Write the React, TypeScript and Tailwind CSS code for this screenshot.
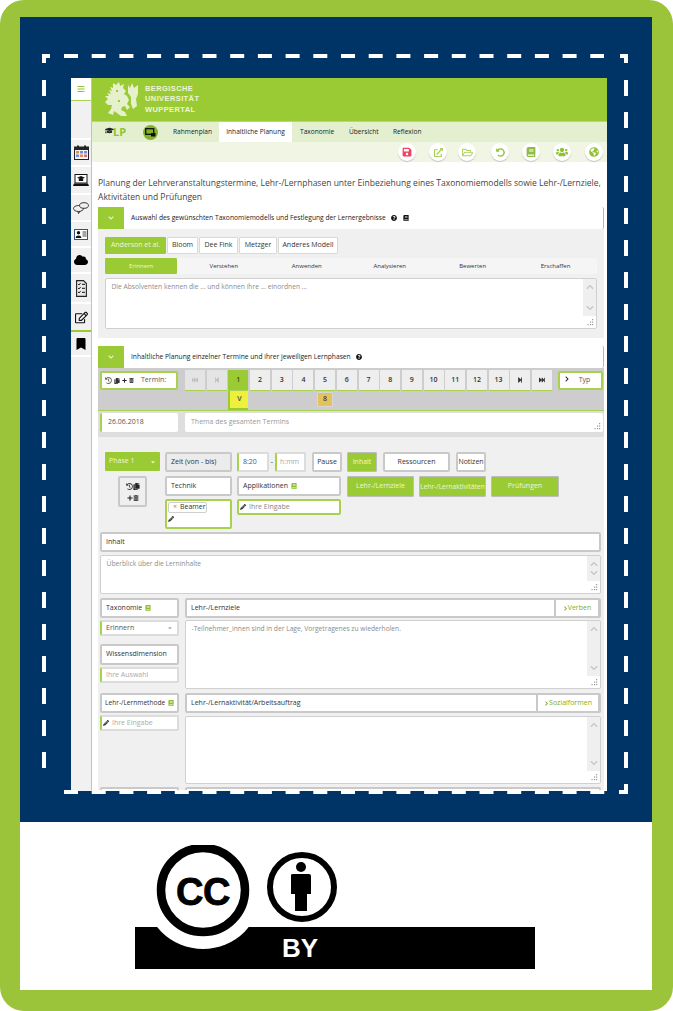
import React from 'react'
import {
  FaBars,
  FaBook,
  FaBookmark,
  FaCaretDown,
  FaChevronDown,
  FaChevronRight,
  FaChevronUp,
  FaCloud,
  FaCopy,
  FaExternalLinkAlt,
  FaGlobeAmericas,
  FaGraduationCap,
  FaPencilAlt,
  FaPlus,
  FaQuestionCircle,
  FaRegEdit,
  FaRegFolderOpen,
  FaSave,
  FaStepBackward,
  FaStepForward,
  FaFastBackward,
  FaFastForward,
  FaTrashAlt,
  FaUndoAlt,
  FaUsers,
  FaHistory,
} from 'react-icons/fa'

const boxGray = 'border-2 border-[#c9c9c9] rounded-[2px] bg-white flex items-center text-[7px] font-medium text-[#333]'
const boxGreen = 'border-2 border-[#a8d24e] rounded-[2px] bg-white flex items-center text-[7px] text-[#555]'
const greenBtn = 'bg-[#9bcb34] border border-[#bdbdbd] rounded-[1px] flex items-center justify-center text-[7px] font-medium text-[#eef6dc]'

function CalendarIcon() {
  return (
    <svg width="15" height="15" viewBox="0 0 15 15">
      <rect x="0.5" y="2" width="14" height="12.5" fill="#f3f3f3" stroke="#222" />
      <rect x="0.5" y="2" width="14" height="3" fill="#222" />
      <rect x="3" y="0.5" width="2" height="3" fill="#222" />
      <rect x="10" y="0.5" width="2" height="3" fill="#222" />
      <rect x="2" y="6" width="3" height="2.5" fill="#e0904a" />
      <rect x="6" y="6" width="3" height="2.5" fill="#6f8fd0" />
      <rect x="10" y="6" width="3" height="2.5" fill="#6f8fd0" />
      <rect x="2" y="9.5" width="3" height="2.5" fill="#6f8fd0" />
      <rect x="6" y="9.5" width="3" height="2.5" fill="#e0904a" />
      <rect x="10" y="9.5" width="3" height="2.5" fill="#d66a8a" />
    </svg>
  )
}

function LaptopIcon() {
  return (
    <svg width="16" height="12" viewBox="0 0 16 12">
      <rect x="2" y="0.5" width="12" height="8.5" fill="#fff" stroke="#111" />
      <path d="M8 2 L12 3.8 L8 5.6 L4 3.8 Z M5.8 5 H10.2 V7 H5.8 Z" fill="#111" />
      <path d="M1 9.5 H15 L16 12 H0 Z" fill="#111" />
    </svg>
  )
}

function BubblesIcon() {
  return (
    <svg width="16" height="12" viewBox="0 0 16 12" fill="none" stroke="#222" strokeWidth="0.9">
      <ellipse cx="5.5" cy="6.5" rx="5" ry="3" />
      <ellipse cx="11" cy="3.5" rx="4.4" ry="2.8" fill="#f1f1f1" />
      <path d="M5 9.5 L5.5 11.5 L7 9.3" />
    </svg>
  )
}

function CardIcon() {
  return (
    <svg width="14" height="11" viewBox="0 0 14 11">
      <rect x="0.5" y="0.5" width="13" height="10" fill="#fff" stroke="#33527c" />
      <circle cx="4.5" cy="3.7" r="1.7" fill="#111" />
      <path d="M1.7 9 C1.7 5.8 7.3 5.8 7.3 9 Z" fill="#111" />
      <path d="M8.5 3 H12.5 M8.5 5 H12.5 M8.5 7 H12.5" stroke="#333" strokeWidth="0.9" />
    </svg>
  )
}

function ChecklistIcon() {
  return (
    <svg width="11" height="17" viewBox="0 0 11 17" fill="none">
      <path d="M0.6 0.6 H7.5 L10.4 3.5 V16.4 H0.6 Z" fill="#e8e8e8" stroke="#222" strokeWidth="1.1" />
      <path d="M2 4 L3 5 L4.6 3 M2 8 L3 9 L4.6 7 M2 12 L3 13 L4.6 11" stroke="#111" strokeWidth="0.9" />
      <path d="M6 4.3 H9 M6 8.3 H9 M6 12.3 H9" stroke="#111" strokeWidth="1" />
    </svg>
  )
}

function LionLogo() {
  return (
    <svg width="33" height="35" viewBox="0 0 33 35" fill="#e6f1cc">
      <path d="M8 1 L11 3 L14 0 L15 4 L19 2 L18 6 L21 9 L19 12 L22 14 L24 18 L22 22 L25 25 L22 28 L20 24 L17 25 L16 28 L20 30 L22 34 L16 34 L12 31 L9 29 L8 33 L3 31 L6 27 L7 23 L3 23 L0 20 L3 17 L0 14 L4 14 L2 11 L6 12 L4 8 L7 9 L5 5 L8 6 Z" />
      <path d="M23 3 L25 6 L27 1 L29 6 L33 3 L33 12 L31 17 L32 24 L28 27 L26 22 L26 15 L23 11 Z" />
      <path d="M11 8 h2 v2 h-2 Z M13 18 h2 v2 h-2 Z" fill="#9bcb34" />
    </svg>
  )
}

function ScreenIcon() {
  return (
    <span className="w-[15px] h-[15px] rounded-full bg-[#84b32a] flex items-center justify-center">
      <svg width="11" height="9" viewBox="0 0 11 9">
        <rect x="0.7" y="0.7" width="8" height="5.6" fill="none" stroke="#111" strokeWidth="1.3" />
        <path d="M6 5 L10.5 5 L10.5 8.5 L6 8.5 Z" fill="#111" />
      </svg>
    </span>
  )
}

function Grip() {
  return (
    <svg className="absolute right-[2px] bottom-[2px]" width="7" height="7" viewBox="0 0 7 7" fill="#9a9a9a">
      <rect x="5" y="0" width="1.2" height="1.2" />
      <rect x="3" y="2.5" width="1.2" height="1.2" />
      <rect x="5" y="2.5" width="1.2" height="1.2" />
      <rect x="0.5" y="5" width="1.2" height="1.2" />
      <rect x="3" y="5" width="1.2" height="1.2" />
      <rect x="5" y="5" width="1.2" height="1.2" />
    </svg>
  )
}

interface AreaProps {
  text?: string
  className: string
  scroll?: boolean
}

function Area({ text, className, scroll = true }: AreaProps) {
  return (
    <div className={`relative border-[1.5px] border-[#d0d0d0] rounded-[2px] bg-white flex ${className}`}>
      <div className="flex-1 pl-[5.5px] pt-[3px] text-[6.7px] leading-[9px] text-[#8c8c8c]">{text}</div>
      {scroll && (
        <div className="w-[13px] mb-[12px] bg-[#efefef] flex flex-col items-center justify-between py-[4px] text-[#c4c4c4]">
          <FaChevronUp size={8} />
          <FaChevronDown size={8} />
        </div>
      )}
      <Grip />
    </div>
  )
}

function Book() {
  return <FaBook size={6} className="text-[#8fbf35] ml-[3px] shrink-0" />
}

const subTabs = ['Verstehen', 'Anwenden', 'Analysieren', 'Bewerten', 'Erschaffen']
const modelTabs = [
  { label: 'Bloom', w: 'w-[31px]' },
  { label: 'Dee Fink', w: 'w-[39px]' },
  { label: 'Metzger', w: 'w-[38px]' },
  { label: 'Anderes Modell', w: 'w-[60px]' },
]
const navTabs = [
  { label: 'Rahmenplan', cls: 'ml-[15px] w-[46px]' },
  { label: 'Inhaltliche Planung', cls: 'w-[73px] bg-white h-full justify-center' },
  { label: 'Taxonomie', cls: 'ml-[8px] w-[41px]' },
  { label: 'Übersicht', cls: 'ml-[8px] w-[36px]' },
  { label: 'Reflexion', cls: 'ml-[8px] w-[36px]' },
]
const sideItems = [
  { icon: <CalendarIcon />, h: 'h-[27px]' },
  { icon: <LaptopIcon />, h: 'h-[28px]' },
  { icon: <BubblesIcon />, h: 'h-[27px]' },
  { icon: <CardIcon />, h: 'h-[26px]' },
  { icon: <FaCloud size={14} className="text-black" />, h: 'h-[26px]' },
  { icon: <ChecklistIcon />, h: 'h-[30px]' },
  { icon: <FaRegEdit size={13} className="text-[#111]" />, h: 'h-[28px]' },
]
const tools = [
  { icon: <FaSave size={10} className="text-[#f2415f]" />, ml: 'ml-[306px]' },
  { icon: <FaExternalLinkAlt size={9} className="text-[#a9d257]" />, ml: 'ml-[13px]' },
  { icon: <FaRegFolderOpen size={11} className="text-[#a9d257]" />, ml: 'ml-[11px]' },
  { icon: <FaUndoAlt size={9} className="text-[#8fc332]" />, ml: 'ml-[15px]' },
  { icon: <FaBook size={10} className="text-[#8fbb46]" />, ml: 'ml-[13px]' },
  { icon: <FaUsers size={12} className="text-[#8fc332]" />, ml: 'ml-[13px]' },
  { icon: <FaGlobeAmericas size={10} className="text-[#8fc332]" />, ml: 'ml-[14px]' },
]
const pages: React.ReactNode[] = [
  <FaFastBackward size={6} />,
  <FaStepBackward size={6} />,
  '1', '2', '3', '4', '5', '6', '7', '8', '9', '10', '11', '12', '13',
  <FaStepForward size={6} />,
  <FaFastForward size={6} />,
]

function Pager() {
  return (
    <div className="bg-[#cdcdcd] border-b border-[#a8d24e] h-[43px] flex flex-col">
      <div className="h-[23px] flex pt-[2px]">
        <div className={`${boxGreen} ml-[2px] mt-[1px] w-[78px] h-[19px] pl-[3px]`}>
          <FaHistory size={7} className="text-[#666] shrink-0" />
          <FaCopy size={6} className="text-[#333] ml-[2px] shrink-0" />
          <FaPlus size={5} className="text-[#222] ml-[2px] shrink-0" />
          <FaTrashAlt size={5} className="text-[#333] ml-[2px] shrink-0" />
          <span className="ml-[7px] font-medium">Termin:</span>
        </div>
        <div className="ml-[7px] flex h-[21px]">
          {pages.map((page, i) => (
            <div
              key={i}
              className={`w-[20px] mr-[1.7px] flex items-center justify-center text-[7px] font-semibold border-b border-[#a8d24e] ${
                i === 2 ? 'bg-[#9bcb34] text-[#3a5208]' : i < 2 ? 'bg-[#e4e4e4] text-[#c0c0c0]' : 'bg-[#eeeeee] text-[#333]'
              }`}
            >
              {page}
            </div>
          ))}
        </div>
        <div className={`${boxGreen} ml-[4px] mt-[1px] w-[45px] h-[19px] font-medium`}>
          <FaChevronRight size={6} className="ml-[4px] mb-[3px] text-[#222]" />
          <span className="ml-[9px]">Typ</span>
        </div>
      </div>
      <div className="ml-[87px] flex flex-1">
        {pages.map((_, i) => (
          <div key={i} className={`w-[20px] mr-[1.7px] ${i === 2 ? 'bg-[#9bcb34] pl-[2px] pb-[2px]' : ''}`}>
            {i === 2 && (
              <div className="h-full bg-[#eef03c] flex items-center justify-center text-[7px] font-semibold text-[#444]">V</div>
            )}
            {i === 6 && (
              <div className="mx-[2px] mt-[1px] h-[15px] bg-[#e3c35e] border border-[#d8d8d8] rounded-[1px] flex items-center justify-center text-[7px] font-semibold text-[#444]">
                8
              </div>
            )}
          </div>
        ))}
      </div>
    </div>
  )
}

function AccordionHead({ title, book }: { title: string; book?: boolean }) {
  return (
    <div className="h-[22px] flex items-center bg-white border-r border-[#a8d24e] rounded-r-[2px]">
      <div className="w-[26px] h-full bg-[#9bcb34] flex items-center justify-center">
        <FaChevronDown size={6} className="text-[#f3f8e4]" />
      </div>
      <span className="ml-[7px] text-[6.7px] font-medium text-[#222]">{title}</span>
      <FaQuestionCircle size={6} className="ml-[5px] text-[#111]" />
      {book && <FaBook size={6} className="ml-[6px] text-[#111]" />}
    </div>
  )
}

function PhaseBlock() {
  return (
    <div className="flex gap-[5px] ml-[7px]">
      <div className="w-[55px]">
        <div className="h-[19px] bg-[#9bcb34] rounded-[1px] flex items-center justify-between px-[4px] text-[7px] font-medium text-[#eef6dc]">
          Phase 1
          <FaCaretDown size={6} />
        </div>
        <div className="mt-[5px] ml-[13px] w-[29px] h-[31px] border-2 border-[#c9c9c9] rounded-[2px] bg-[#efefef] flex flex-wrap items-center justify-center px-[3px] py-[2px] text-[#444]">
          <FaHistory size={7} />
          <FaCopy size={7} className="text-[#222]" />
          <FaPlus size={6} className="text-[#222]" />
          <FaTrashAlt size={6} />
        </div>
      </div>
      <div className="w-[67px]">
        <div className="h-[20px] border-2 border-[#c9c9c9] rounded-[2px] bg-[#ececec] flex items-center pl-[4px] text-[7px] font-medium text-[#333]">
          Zeit (von - bis)
        </div>
        <div className={`${boxGray} mt-[4px] h-[20px] pl-[4px]`}>Technik</div>
        <div className={`${boxGreen} mt-[3px] h-[30px] flex-col !items-start pl-[1px] pt-[1px]`}>
          <div className="h-[11px] w-[39px] border border-[#cfcfcf] rounded-[2px] flex items-center pl-[4px] font-medium text-[#333]">
            <span className="text-[#888] mr-[3px]">×</span>Beamer
          </div>
          <FaPencilAlt size={6} className="mt-[3px] text-[#333]" />
        </div>
      </div>
      <div className="w-[105px]">
        <div className="h-[20px] flex items-center">
          <div className="w-[32px] h-[20px] border-2 border-[#dcdcdc] border-l-[#a8d24e] rounded-[2px] bg-white flex items-center pl-[4px] text-[7px] font-medium text-[#555]">
            8:20
          </div>
          <span className="w-[6px] text-center text-[7px] text-[#333]">-</span>
          <div className="w-[31px] h-[20px] border-2 border-[#dcdcdc] border-l-[#a8d24e] rounded-[2px] bg-white flex items-center pl-[3px] text-[7px] text-[#aaa]">
            h:mm
          </div>
          <div className={`${boxGray} ml-[6px] w-[30px] h-[20px] justify-center`}>Pause</div>
        </div>
        <div className={`${boxGray} mt-[4px] w-[104px] h-[20px] pl-[4px]`}>
          Applikationen
          <Book />
        </div>
        <div className={`${boxGreen} mt-[3px] w-[104px] h-[16px] pl-[1px] text-[#888]`}>
          <FaPencilAlt size={6} className="text-[#333] mr-[3px]" />
          Ihre Eingabe
        </div>
      </div>
      <div>
        <div className="flex gap-[6px]">
          <div className={`${greenBtn} w-[30px] h-[20px]`}>Inhalt</div>
          <div className={`${boxGray} w-[67px] h-[20px] justify-center`}>Ressourcen</div>
          <div className={`${boxGray} w-[30px] h-[20px] justify-center whitespace-nowrap`}>Notizen</div>
        </div>
        <div className="flex gap-[5px] mt-[4px]">
          <div className={`${greenBtn} w-[67px] h-[21px]`}>Lehr-/Lernziele</div>
          <div className={`${greenBtn} w-[67px] h-[21px] whitespace-nowrap !text-[6.6px]`}>Lehr-/Lernaktivitäten</div>
          <div className={`${greenBtn} w-[68px] h-[21px]`}>Prüfungen</div>
        </div>
      </div>
    </div>
  )
}

function LearningGoals() {
  return (
    <div className="ml-[2px] w-[501px]">
      <div className={`${boxGray} h-[20px] mt-[3px] pl-[4px]`}>Inhalt</div>
      <Area className="h-[39px] mt-[3px]" text="Überblick über die Lerninhalte" />
      <div className="flex gap-[6px] mt-[4px] h-[91px]">
        <div className="w-[79px]">
          <div className={`${boxGray} h-[20px] pl-[4px]`}>
            Taxonomie
            <Book />
          </div>
          <div className="mt-[2px] h-[16px] border-2 border-[#dcdcdc] border-l-[#a8d24e] rounded-[2px] bg-white flex items-center justify-between px-[4px] text-[7px] font-medium text-[#555]">
            Erinnern
            <FaCaretDown size={6} className="text-[#aaa]" />
          </div>
          <div className={`${boxGray} mt-[8px] h-[21px] pl-[4px]`}>Wissensdimension</div>
          <div className="mt-[2px] h-[16px] border-2 border-[#dcdcdc] border-l-[#a8d24e] rounded-[2px] bg-white flex items-center pl-[4px] text-[7px] text-[#aaa]">
            Ihre Auswahl
          </div>
        </div>
        <div className="w-[416px]">
          <div className={`${boxGray} h-[20px] pl-[4px] justify-between`}>
            Lehr-/Lernziele
            <div className="w-[46px] h-[20px] border-2 border-[#c9c9c9] rounded-[2px] -mr-[1px] flex items-center justify-center text-[#7fae25]">
              <FaChevronRight size={5} className="text-[#6f9c18]" />
              Verben
            </div>
          </div>
          <Area
            className="h-[69px] mt-[2px]"
            text="-Teilnehmer_innen sind in der Lage, Vorgetragenes zu wiederholen."
          />
        </div>
      </div>
      <div className="flex gap-[6px] mt-[4px] h-[91px]">
        <div className="w-[79px]">
          <div className={`${boxGray} h-[20px] pl-[3px] whitespace-nowrap !text-[6.6px]`}>
            Lehr-/Lernmethode
            <Book />
          </div>
          <div className="mt-[2px] h-[16px] border-2 border-[#dcdcdc] border-l-[#a8d24e] rounded-[2px] bg-white flex items-center pl-[1px] text-[7px] text-[#aaa]">
            <FaPencilAlt size={6} className="text-[#333] mr-[3px]" />
            Ihre Eingabe
          </div>
        </div>
        <div className="w-[416px]">
          <div className={`${boxGray} h-[20px] pl-[4px] justify-between`}>
            Lehr-/Lernaktivität/Arbeitsauftrag
            <div className="w-[64px] h-[20px] border-2 border-[#c9c9c9] rounded-[2px] -mr-[1px] flex items-center justify-center text-[#7fae25]">
              <FaChevronRight size={5} className="text-[#6f9c18]" />
              Sozialformen
            </div>
          </div>
          <Area className="h-[68px] mt-[3px]" />
        </div>
      </div>
      <div className="flex gap-[6px] mt-[3px]">
        <div className={`${boxGray} w-[79px] h-[20px]`} />
        <div className={`${boxGray} w-[416px] h-[20px]`} />
      </div>
    </div>
  )
}

function Screen() {
  return (
    <div className="w-[536px] h-[713px] flex overflow-hidden bg-white font-['Open_Sans',sans-serif]">
      <aside className="w-[21px] shrink-0 bg-[#f1f1f1] border-r border-[#b5d670] flex flex-col">
        <div className="h-[23px] bg-white border-b border-[#a8d24e] flex items-center justify-center">
          <FaBars size={8} className="text-[#8fc332]" />
        </div>
        <div className="h-[37px]" />
        {sideItems.map((item, i) => (
          <div key={i} className={`${item.h} border-t-2 border-white flex items-center justify-center`}>
            {item.icon}
          </div>
        ))}
        <div className="h-[27px] border-t-2 border-[#9bcb34] border-b-2 border-b-white flex items-center justify-center">
          <FaBookmark size={12} className="text-black" />
        </div>
      </aside>
      <main className="flex-1 min-w-0">
        <header className="h-[44px] bg-[#9bcb34] border-b border-[#b6da6c] flex items-center pl-[13px]">
          <LionLogo />
          <div className="ml-[7px] text-[7.5px] leading-[10.4px] font-bold tracking-[0.4px] text-[#edf5d8] font-['Liberation_Sans',sans-serif]">
            <div>BERGISCHE</div>
            <div>UNIVERSITÄT</div>
            <div>WUPPERTAL</div>
          </div>
        </header>
        <nav className="h-[20px] bg-[#e4efcf] flex items-center text-[6.6px] font-medium text-[#222] whitespace-nowrap">
          <span className="ml-[13px] w-[24px] flex items-center relative">
            <FaGraduationCap size={9} className="text-[#222] -mt-[3px] shrink-0" />
            <span className="-ml-[1px] text-[11px] font-bold text-[#8fc332]">LP</span>
          </span>
          <span className="ml-[14px]">
            <ScreenIcon />
          </span>
          {navTabs.map((tab) => (
            <span key={tab.label} className={`flex items-center ${tab.cls}`}>
              {tab.label}
            </span>
          ))}
        </nav>
        <div className="h-[20px] bg-[#f0f5e4] flex items-center">
          {tools.map((tool, i) => (
            <span
              key={i}
              className={`w-[18px] h-[18px] rounded-full bg-white shadow-[0_1px_1px_#c4c4c4] flex items-center justify-center ${tool.ml}`}
            >
              {tool.icon}
            </span>
          ))}
        </div>
        <h1 className="ml-[6px] pt-[14px] pb-[3px] text-[8.52px] leading-[14px] font-normal text-[#444]">
          Planung der Lehrveranstaltungstermine, Lehr-/Lernphasen unter Einbeziehung eines Taxonomiemodells sowie
          Lehr-/Lernziele, Aktivitäten und Prüfungen
        </h1>
        <div className="ml-[6px] w-[506px]">
          <AccordionHead title="Auswahl des gewünschten Taxonomiemodells und Festlegung der Lernergebnisse" book />
          <section className="h-[109px] bg-[#f0f0f0] pl-[7px] pr-[7px] pt-[8px]">
            <div className="h-[17px] flex text-[7px] font-medium text-[#333]">
              <div className="w-[61px] mr-[1px] bg-[#9bcb34] rounded-[1px] flex items-center justify-center text-[#eef6dc]">
                Anderson et al.
              </div>
              {modelTabs.map((tab) => (
                <div
                  key={tab.label}
                  className={`${tab.w} mr-[1px] bg-white border border-[#d9d9d9] rounded-[1px] flex items-center justify-center`}
                >
                  {tab.label}
                </div>
              ))}
            </div>
            <div className="mt-[4px] h-[16px] flex bg-[#f5f5f5] rounded-[2px] text-[6px] font-medium text-[#333]">
              <div className="w-[73px] mr-[5px] bg-[#9bcb34] rounded-[1px] flex items-center justify-center text-[#eef6dc]">
                Erinnern
              </div>
              {subTabs.map((tab) => (
                <div key={tab} className="w-[83.6px] flex items-center justify-center">
                  {tab}
                </div>
              ))}
            </div>
            <Area className="mt-[4px] h-[51px]" text="Die Absolventen kennen die ... und können ihre ... einordnen ..." />
          </section>
          <div className="h-[8px]" />
          <AccordionHead title="Inhaltliche Planung einzelner Termine und ihrer jeweiligen Lernphasen" />
          <Pager />
          <div className="h-[26px] bg-[#dedede] flex pt-[2px]">
            <div className="ml-[2px] w-[78px] h-[19px] bg-white border-l-2 border-[#a8d24e] rounded-[2px] flex items-center pl-[6px] text-[7px] font-medium text-[#555]">
              26.06.2018
            </div>
            <div className="relative ml-[7px] w-[418px] h-[19px] bg-white rounded-[2px] flex items-center pl-[6px] text-[7px] text-[#999]">
              Thema des gesamten Termins
              <Grip />
            </div>
          </div>
          <section className="bg-[#f0f0f0] pt-[15px] pb-[20px]">
            <PhaseBlock />
            <LearningGoals />
          </section>
        </div>
      </main>
    </div>
  )
}

function DashedFrame() {
  // coordinates are relative to the navy block, which starts at 20,17
  return (
    <svg className="absolute left-0 top-0 pointer-events-none" width="632" height="805" fill="none" stroke="#fff">
      <path d="M44 39 H584" strokeWidth="4" strokeDasharray="14 13.7" />
      <path d="M44 775 H586" strokeWidth="4" strokeDasharray="14 13.7" />
      <path d="M24 63 V767" strokeWidth="4" strokeDasharray="16 16" />
      <path d="M606 63 V767" strokeWidth="4" strokeDasharray="16 16" />
      <path d="M30 39 H24 V46" strokeWidth="4" />
      <path d="M600 39 H606 V46" strokeWidth="4" />
      <path d="M606 767 V775 H599" strokeWidth="4" />
    </svg>
  )
}

function LicenseBadge() {
  return (
    <svg className="ml-[115px] mt-[23px]" width="400" height="124" viewBox="0 0 400 124">
      <rect x="0" y="82" width="400" height="42" fill="#000" />
      <circle cx="68" cy="45" r="59" fill="#fff" />
      <circle cx="68" cy="45" r="42" fill="#fff" stroke="#000" strokeWidth="8.5" />
      <text
        x="68"
        y="60"
        textAnchor="middle"
        fontFamily="Liberation Sans, sans-serif"
        fontWeight="700"
        fontSize="38"
        letterSpacing="-0.5"
        stroke="#000"
        strokeWidth="0.8"
      >
        CC
      </text>
      <circle cx="167" cy="42" r="32" fill="#fff" stroke="#000" strokeWidth="6" />
      <circle cx="166" cy="22" r="5" fill="#000" />
      <path d="M156 30 Q156 29 158 29 H174 Q176 29 176 31 V49 H172 V66 H160 V49 H156 Z" fill="#000" />
      <text x="147" y="112" fontFamily="Liberation Sans, sans-serif" fontWeight="700" fontSize="26" fill="#fff">
        BY
      </text>
    </svg>
  )
}

export default function App() {
  return (
    <div className="w-[673px] h-[1011px] bg-white overflow-hidden">
      <div className="w-full h-full rounded-[24px] bg-[#9bc43a] pt-[17px] pl-[20px] pr-[21px] pb-[21px]">
        <div className="relative h-[805px] bg-[#003366] pt-[61px] pl-[51px]">
          <Screen />
          <DashedFrame />
        </div>
        <div className="h-[168px] bg-white overflow-hidden">
          <LicenseBadge />
        </div>
      </div>
    </div>
  )
}
